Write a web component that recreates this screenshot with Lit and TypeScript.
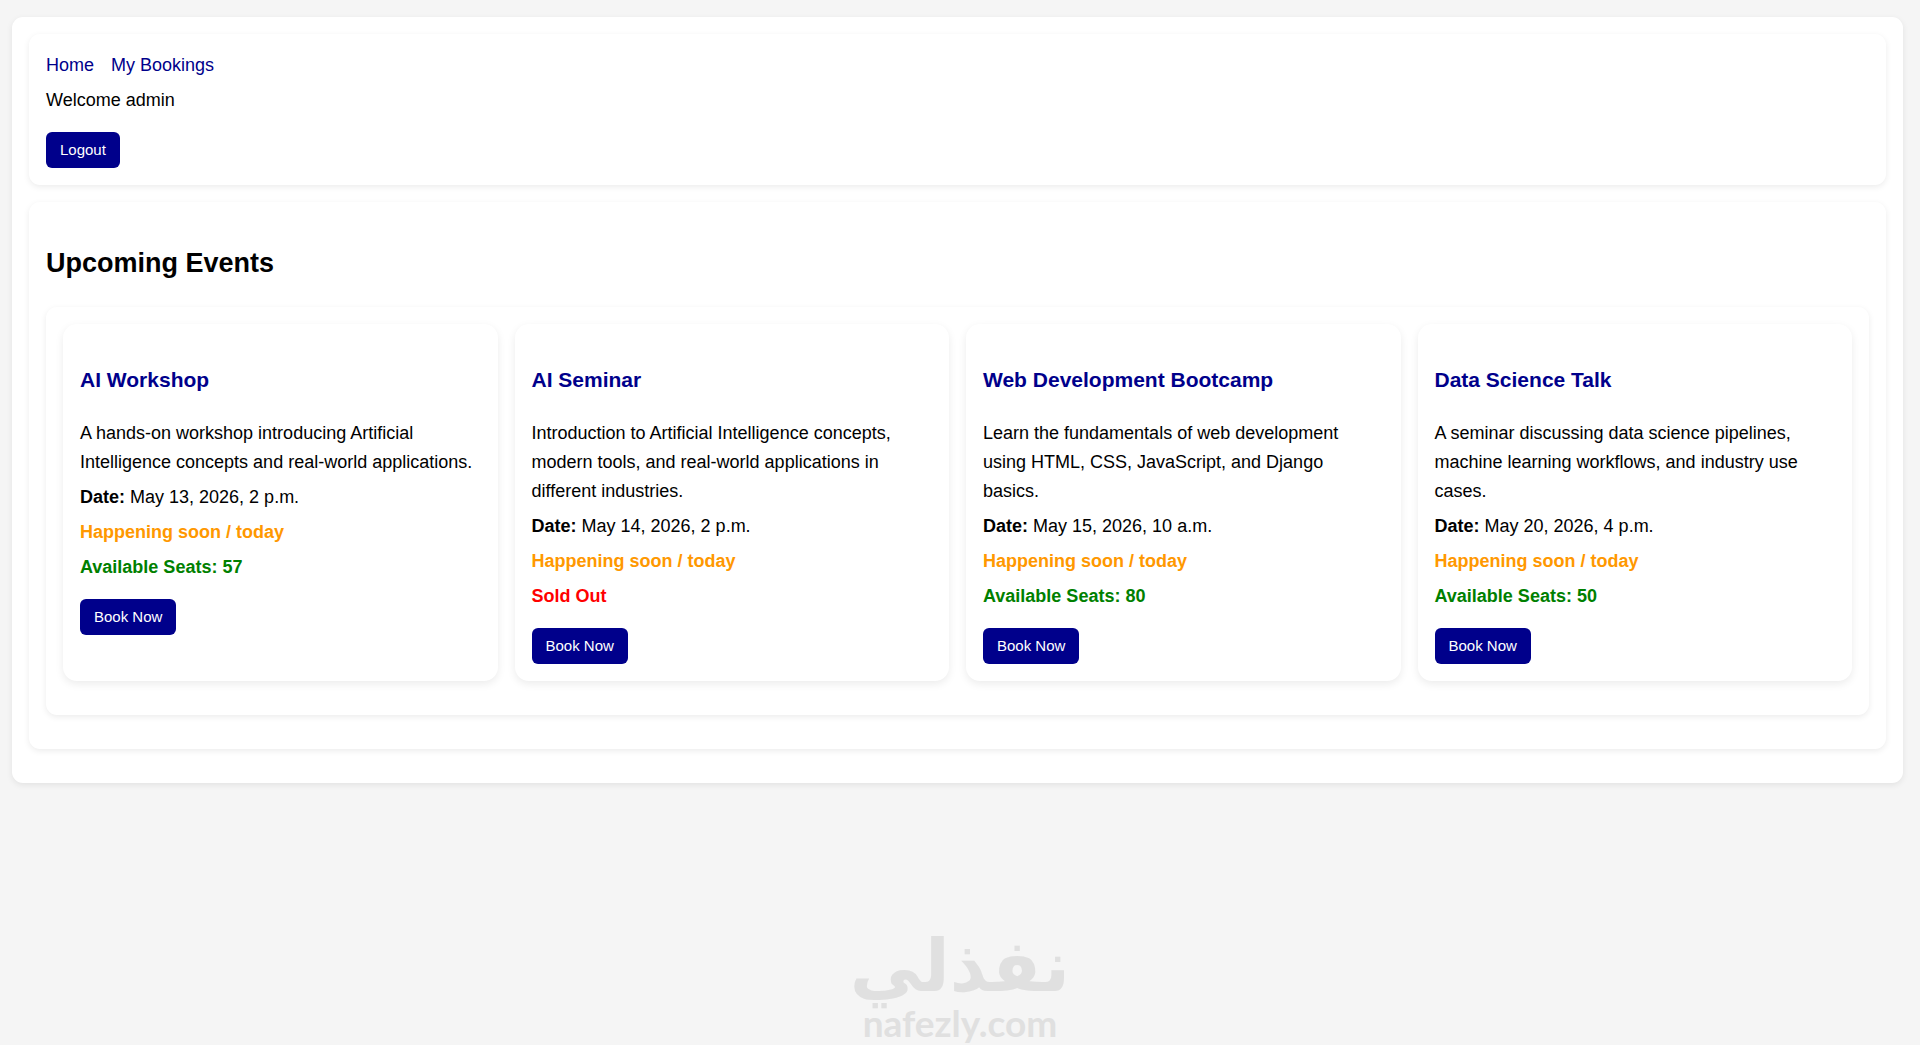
import { LitElement, html, css } from "lit";
import { customElement, property } from "lit/decorators.js";

interface EventItem {
  title: string;
  description: string;
  date: string;
  seats: number;
}

const EVENTS: EventItem[] = [
  {
    title: "AI Workshop",
    description:
      "A hands-on workshop introducing Artificial Intelligence concepts and real-world applications.",
    date: "May 13, 2026, 2 p.m.",
    seats: 57,
  },
  {
    title: "AI Seminar",
    description:
      "Introduction to Artificial Intelligence concepts, modern tools, and real-world applications in different industries.",
    date: "May 14, 2026, 2 p.m.",
    seats: 0,
  },
  {
    title: "Web Development Bootcamp",
    description:
      "Learn the fundamentals of web development using HTML, CSS, JavaScript, and Django basics.",
    date: "May 15, 2026, 10 a.m.",
    seats: 80,
  },
  {
    title: "Data Science Talk",
    description:
      "A seminar discussing data science pipelines, machine learning workflows, and industry use cases.",
    date: "May 20, 2026, 4 p.m.",
    seats: 50,
  },
];

const buttonStyles = css`
  .btn {
    display: block;
    margin: 17px 0 0;
    padding: 9px 14px;
    border: 0;
    border-radius: 6px;
    background: #00008b;
    color: #fff;
    font-family: inherit;
    font-size: 15px;
    line-height: 18px;
    cursor: pointer;
  }
  .btn:hover {
    background: #0000b3;
  }
`;

@customElement("event-card")
export class EventCard extends LitElement {
  @property({ attribute: false }) event!: EventItem;

  static styles = [
    buttonStyles,
    css`
      :host {
        display: block;
        padding: 17px;
        border-radius: 14px;
        background: #fff;
        box-shadow: 0 3px 9px rgba(0, 0, 0, 0.08);
      }
      .title {
        margin: 22px 0;
        color: #00008b;
        font-size: 21px;
        line-height: 34px;
      }
      .line {
        margin: 6px 0;
      }
      .soon,
      .seats,
      .sold {
        font-weight: bold;
      }
      .soon {
        color: #ff9800;
      }
      .seats {
        color: #008000;
      }
      .sold {
        color: #ff0000;
      }
    `,
  ];

  render() {
    const e = this.event;
    return html`
      <h3 class="title">${e.title}</h3>
      <p class="line">${e.description}</p>
      <p class="line"><strong>Date:</strong> ${e.date}</p>
      <p class="line soon">Happening soon / today</p>
      ${e.seats > 0
        ? html`<p class="line seats">Available Seats: ${e.seats}</p>`
        : html`<p class="line sold">Sold Out</p>`}
      <button class="btn" type="button">Book Now</button>
    `;
  }
}

@customElement("app-root")
export class AppRoot extends LitElement {
  static styles = [
    buttonStyles,
    css`
      :host {
        display: flex;
        flex-direction: column;
        box-sizing: border-box;
        min-height: 100vh;
        background: #f5f5f5;
        color: #000;
        font-family: "Liberation Sans", Arial, sans-serif;
        font-size: 18px;
        line-height: 29px;
      }
      .panel {
        padding: 17px;
        border-radius: 11px;
        background: #fff;
        box-shadow: 0 2px 6px rgba(0, 0, 0, 0.08);
      }
      .page {
        margin: 17px 17px 0 12px;
        padding-bottom: 34px;
      }
      .events {
        margin-top: 17px;
        padding-bottom: 34px;
      }
      .links {
        display: flex;
        gap: 17px;
      }
      .link {
        color: #00008b;
        text-decoration: none;
      }
      .link:hover {
        text-decoration: underline;
      }
      .welcome {
        margin: 6px 0;
      }
      .heading {
        margin: 22px 0;
        font-size: 27px;
        line-height: 44px;
      }
      .grid {
        display: grid;
        grid-template-columns: repeat(auto-fit, minmax(320px, 1fr));
        gap: 17px;
        padding-bottom: 34px;
      }
      .brand {
        display: flex;
        flex-direction: column;
        align-items: center;
        margin-top: auto;
        padding-bottom: 2px;
        color: #e0e0e0;
        font-weight: bold;
        user-select: none;
      }
      .brand-arabic {
        font-family: "DejaVu Sans", sans-serif;
        font-size: 72px;
        line-height: 74px;
      }
      .brand-latin {
        font-family: Lato, sans-serif;
        font-size: 37px;
        line-height: 40px;
      }
    `,
  ];

  render() {
    return html`
      <div class="panel page">
        <header class="panel">
          <nav class="links">
            <a class="link" href="#home">Home</a>
            <a class="link" href="#bookings">My Bookings</a>
          </nav>
          <p class="welcome">Welcome admin</p>
          <button class="btn" type="button">Logout</button>
        </header>
        <main class="panel events">
          <h2 class="heading">Upcoming Events</h2>
          <div class="panel grid">
            ${EVENTS.map((e) => html`<event-card .event=${e}></event-card>`)}
          </div>
        </main>
      </div>
      <footer class="brand">
        <span class="brand-arabic" lang="ar" dir="rtl">نفذلي</span>
        <span class="brand-latin">nafezly.com</span>
      </footer>
    `;
  }
}
